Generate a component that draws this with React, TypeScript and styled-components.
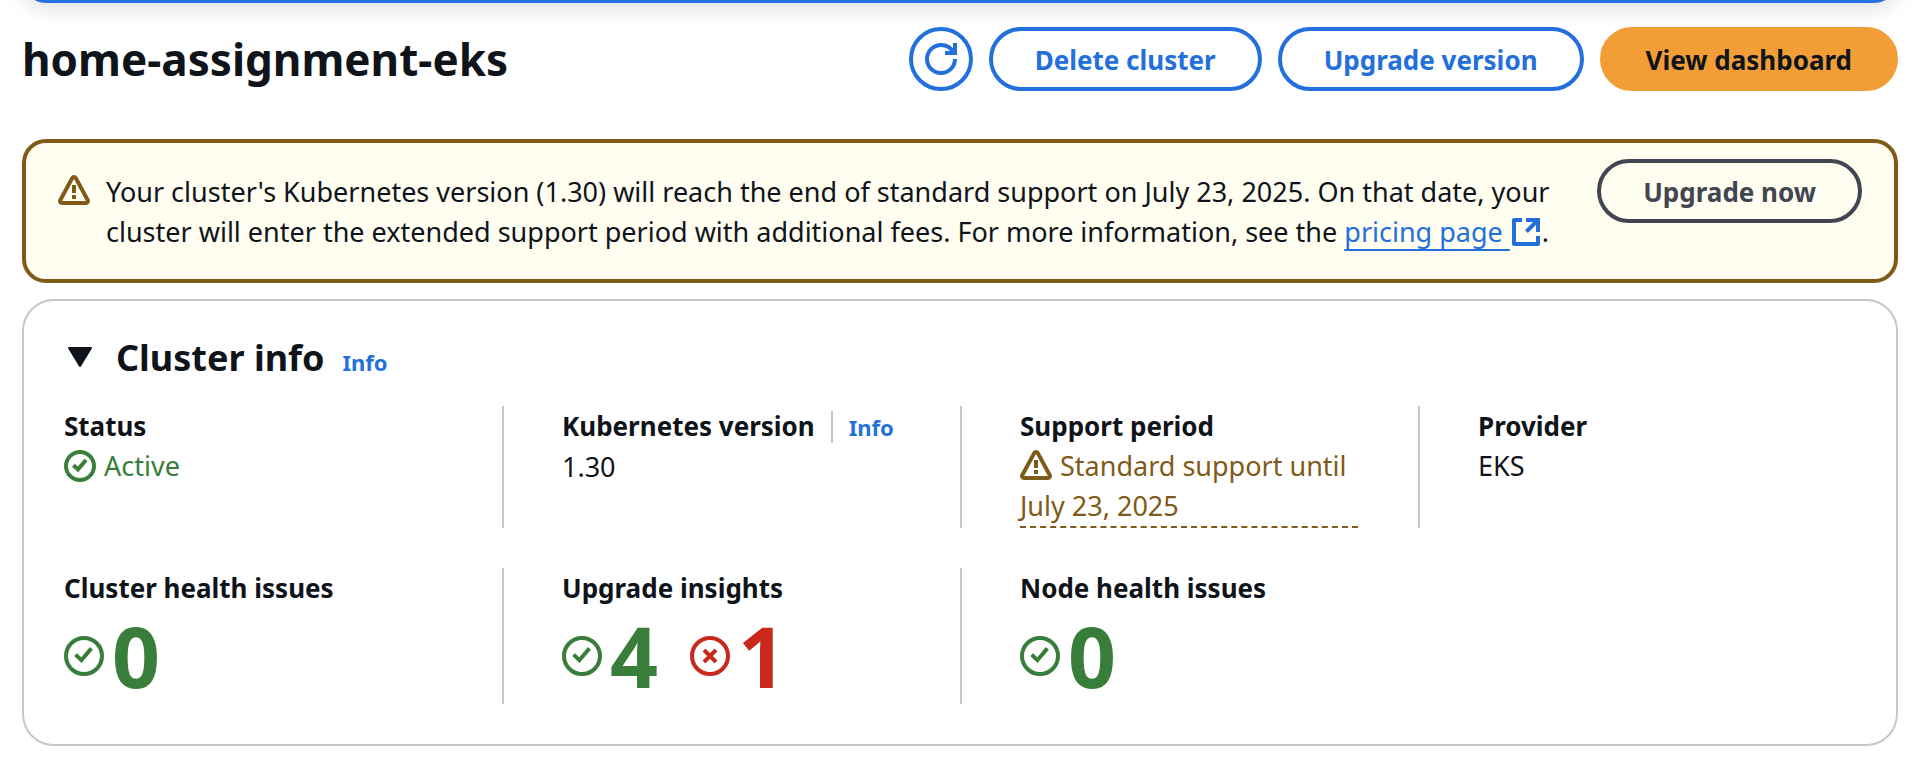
import type { ReactNode } from "react";
import styled, { createGlobalStyle } from "styled-components";

const color = {
  text: "#0f141a",
  link: "#2370dc",
  primary: "#f39d37",
  neutral: "#424650",
  line: "#c6c6cd",
  warning: "#805a18",
  warningBg: "#fffef0",
  success: "#387e3a",
  error: "#c9281c",
};

const GlobalStyle = createGlobalStyle`
  *, *::before, *::after { box-sizing: border-box; }
  body {
    margin: 0;
    background: #ffffff;
    color: ${color.text};
    font-family: "Noto Sans", "Open Sans", sans-serif;
    font-size: 27px;
    line-height: 40px;
  }
  button { font-family: inherit; cursor: pointer; }
  h1, h2, p, dl, dt, dd { margin: 0; }
`;

const Page = styled.div`
  padding: 0 30px 24px 22px;
  overflow: hidden;
`;

const FlashBar = styled.div`
  height: 60px;
  margin-top: -57px;
  border-radius: 24px;
  background: ${color.link};
  box-shadow: 0 4px 20px 1px rgba(15, 20, 26, 0.14);
`;

const Header = styled.header`
  display: flex;
  align-items: center;
  justify-content: space-between;
  gap: 16px;
  padding: 24px 0 48px;
`;

const Title = styled.h1`
  font-size: 44px;
  line-height: 60px;
  font-weight: 700;
`;

const Actions = styled.div`
  display: flex;
  gap: 16px;
`;

type Variant = "normal" | "primary" | "neutral";

const Button = styled.button<{ $variant?: Variant }>`
  flex-shrink: 0;
  height: 64px;
  padding: 2px 42px 0;
  border: 4px solid
    ${({ $variant }) =>
      $variant === "primary" ? color.primary : $variant === "neutral" ? color.neutral : color.link};
  border-radius: 32px;
  background: ${({ $variant }) => ($variant === "primary" ? color.primary : "transparent")};
  color: ${({ $variant }) =>
    $variant === "primary" ? color.text : $variant === "neutral" ? color.neutral : color.link};
  font-size: 26px;
  line-height: 40px;
  font-weight: 700;
  white-space: nowrap;
`;

const IconButton = styled(Button)`
  display: flex;
  align-items: center;
  justify-content: center;
  width: 64px;
  padding: 0;
`;

const Alert = styled.section`
  display: flex;
  align-items: flex-start;
  margin-bottom: 16px;
  padding: 16px 32px 27px;
  border: 4px solid ${color.warning};
  border-radius: 24px;
  background: ${color.warningBg};
`;

const AlertIcon = styled.span`
  display: flex;
  padding: 16px 16px 0 0;
  color: ${color.warning};
`;

const AlertText = styled.p`
  flex: 1;
  padding: 13px 32px 0 0;
`;

const TextLink = styled.a`
  color: ${color.link};
  text-decoration: underline;
  text-decoration-thickness: 2px;
  text-underline-offset: 7px;
  text-decoration-skip-ink: none;
`;

const InfoLink = styled.a`
  color: ${color.link};
  font-size: 22px;
  font-weight: 700;
  text-decoration: none;
`;

const Panel = styled.section`
  border: 2px solid ${color.line};
  border-radius: 32px;
  padding: 33px 18px 40px 22px;
`;

const PanelHeader = styled.div`
  display: flex;
  align-items: baseline;
  gap: 18px;
  padding: 0 18px 24px;
`;

const PanelTitle = styled.h2`
  font-size: 36px;
  line-height: 48px;
`;

const Toggle = styled.button`
  display: flex;
  align-items: baseline;
  gap: 20px;
  padding: 0;
  border: 0;
  background: none;
  color: inherit;
  font-size: inherit;
  line-height: inherit;
  font-weight: 700;

  svg { align-self: center; }
`;

const Fields = styled.dl`
  display: grid;
  grid-template-columns: repeat(4, minmax(0, 1fr));
  row-gap: 40px;
`;

const Cell = styled.div<{ $first?: boolean; $last?: boolean }>`
  padding: 0 60px 0 ${({ $first }) => ($first ? 18 : 58)}px;
  border-right: ${({ $last }) => ($last ? "0" : `2px solid ${color.line}`)};
`;

const Label = styled.dt`
  display: flex;
  align-items: baseline;
  font-size: 26px;
  font-weight: 700;
  white-space: nowrap;
`;

const LabelDivider = styled.span`
  align-self: center;
  width: 2px;
  height: 32px;
  margin: 0 16px;
  background: ${color.line};
`;

type Tone = "success" | "warning" | "error";

const Status = styled.span<{ $tone: Tone }>`
  color: ${({ $tone }) => color[$tone]};
`;

const StatusPopover = styled.button`
  display: block;
  width: 100%;
  padding: 0;
  border: 0;
  border-bottom: 2px dashed ${color.warning};
  background: none;
  color: ${color.warning};
  font-size: 27px;
  line-height: 40px;
  text-align: left;
`;

const Counters = styled.dd`
  display: flex;
  gap: 32px;
`;

const Counter = styled.a<{ $tone: Tone }>`
  display: flex;
  align-items: center;
  gap: 8px;
  color: ${({ $tone }) => color[$tone]};
  font-size: 84px;
  line-height: 96px;
  font-weight: 700;
  text-decoration: none;
`;

const Icon = styled.svg<{ $inline?: boolean; $spaced?: boolean }>`
  flex-shrink: 0;
  fill: none;
  stroke: currentColor;
  stroke-width: 2;
  vertical-align: ${({ $inline }) => ($inline ? "-6px" : "middle")};
  margin-right: ${({ $spaced }) => ($spaced ? "8px" : "0")};
`;

type IconProps = { inline?: boolean; spaced?: boolean };

const SmallIcon = ({ inline, spaced, children }: IconProps & { children: ReactNode }) => (
  <Icon width="32" height="32" viewBox="0 0 16 16" aria-hidden="true" $inline={inline} $spaced={spaced}>
    {children}
  </Icon>
);

const RefreshIcon = () => (
  <SmallIcon>
    <path d="M15 8a7 7 0 1 1-7-7c2.8 0 5.2 1.6 6.3 4" />
    <path d="M10 5h5V0" />
  </SmallIcon>
);

const WarningIcon = (props: IconProps) => (
  <SmallIcon {...props}>
    <path d="M8.9 1.54 14.88 12.6A1 1 0 0 1 14 14H2a1 1 0 0 1-.88-1.4L7.1 1.54a1.02 1.02 0 0 1 1.8 0Z" />
    <path d="M8 5v4M8 10v2" />
  </SmallIcon>
);

const SuccessIcon = (props: IconProps) => (
  <SmallIcon {...props}>
    <circle cx="8" cy="8" r="7" />
    <path d="M4.7 7.6 7 9.7l4-4.7" />
  </SmallIcon>
);

const ExternalIcon = (props: IconProps) => (
  <SmallIcon {...props}>
    <path d="M6 2H2v12h12v-4" strokeLinejoin="round" />
    <path d="M8 2h6v6M14 2 8.2 7.8" />
  </SmallIcon>
);

const CounterIcon = ({ tone }: { tone: Tone }) => (
  <Icon width="40" height="40" viewBox="0 0 20 20" aria-hidden="true">
    <circle cx="10" cy="10" r="9" />
    <path d={tone === "error" ? "m7 7 6 6M13 7l-6 6" : "M5.8 9.3 8.7 12.1l5-5.9"} />
  </Icon>
);

const CaretIcon = () => (
  <Icon width="32" height="32" viewBox="0 0 32 32" aria-hidden="true">
    <path d="M5 6h22L16 24Z" fill="currentColor" strokeLinejoin="round" />
  </Icon>
);

type Count = { tone: Tone; value: number };

const CounterField = ({ label, counts, first, last }: { label: string; counts: Count[]; first?: boolean; last?: boolean }) => (
  <Cell $first={first} $last={last}>
    <Label>{label}</Label>
    <Counters>
      {counts.map(({ tone, value }) => (
        <Counter key={tone} href="#" $tone={tone}>
          <CounterIcon tone={tone} />
          {value}
        </Counter>
      ))}
    </Counters>
  </Cell>
);

export default function App() {
  return (
    <>
      <GlobalStyle />
      <Page>
        <FlashBar />
        <Header>
          <Title>home-assignment-eks</Title>
          <Actions>
            <IconButton type="button" aria-label="Refresh">
              <RefreshIcon />
            </IconButton>
            <Button type="button">Delete cluster</Button>
            <Button type="button">Upgrade version</Button>
            <Button type="button" $variant="primary">View dashboard</Button>
          </Actions>
        </Header>

        <Alert>
          <AlertIcon>
            <WarningIcon />
          </AlertIcon>
          <AlertText>
            Your cluster's Kubernetes version (1.30) will reach the end of standard support on July 23, 2025. On that
            date, your cluster will enter the extended support period with additional fees. For more information, see
            the <TextLink href="#">pricing page&nbsp;<ExternalIcon inline /></TextLink>.
          </AlertText>
          <Button type="button" $variant="neutral">Upgrade now</Button>
        </Alert>

        <Panel>
          <PanelHeader>
            <PanelTitle>
              <Toggle type="button" aria-expanded="true">
                <CaretIcon />
                Cluster info
              </Toggle>
            </PanelTitle>
            <InfoLink href="#">Info</InfoLink>
          </PanelHeader>
          <Fields>
            <Cell $first>
              <Label>Status</Label>
              <dd>
                <Status $tone="success">
                  <SuccessIcon inline spaced />
                  Active
                </Status>
              </dd>
            </Cell>
            <Cell>
              <Label>
                Kubernetes version
                <LabelDivider />
                <InfoLink href="#">Info</InfoLink>
              </Label>
              <dd>1.30</dd>
            </Cell>
            <Cell>
              <Label>Support period</Label>
              <dd>
                <StatusPopover type="button">
                  <WarningIcon inline spaced />
                  Standard support until July 23, 2025
                </StatusPopover>
              </dd>
            </Cell>
            <Cell $last>
              <Label>Provider</Label>
              <dd>EKS</dd>
            </Cell>
            <CounterField first label="Cluster health issues" counts={[{ tone: "success", value: 0 }]} />
            <CounterField
              label="Upgrade insights"
              counts={[
                { tone: "success", value: 4 },
                { tone: "error", value: 1 },
              ]}
            />
            <CounterField last label="Node health issues" counts={[{ tone: "success", value: 0 }]} />
          </Fields>
        </Panel>
      </Page>
    </>
  );
}
